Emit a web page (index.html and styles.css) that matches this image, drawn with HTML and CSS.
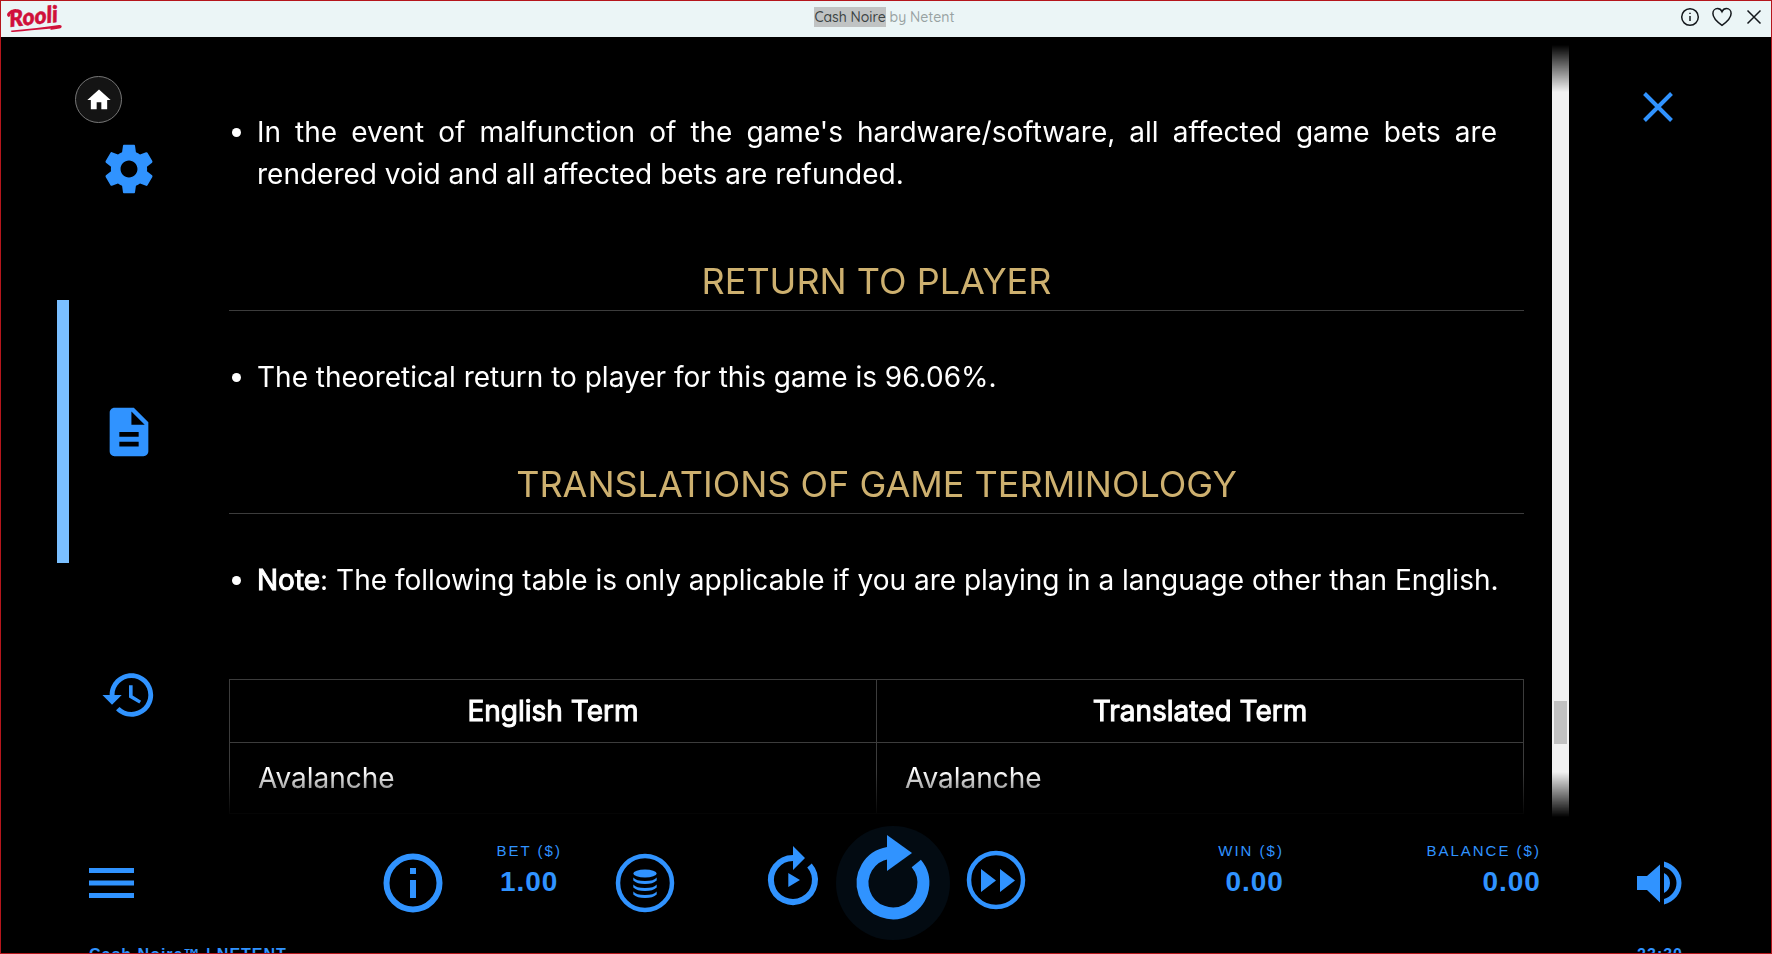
FILE: index.html
```html
<!DOCTYPE html>
<html lang="en">
<head>
    <meta charset="UTF-8">
    <meta name="viewport" content="width=device-width, initial-scale=1.0">
    <title>Cash Noire by Netent</title>
    <link rel="stylesheet" href="styles.css">
</head>
<body>
    <header class="topbar">
        <a class="logo" href="#" aria-label="Rooli">
            <svg width="58" height="28" viewBox="0 0 58 28">
                <text class="logo-text" x="5" y="22" transform="rotate(-6 5 22)">Rooli</text>
                <path d="M3.500 12C0 9.500 3 5.500 11 4L11 6.500C7 7.500 4.500 9 5.500 11Z"/>
                <path d="M7 25.500C24 24 40 22.300 54 20C57.500 19.500 57.500 23 54.500 23.500L45 25C46 24 47 23.500 44 23.700C33 24.500 20 26 8 27C5.500 27.200 5 25.700 7 25.500Z"/>
            </svg>
        </a>
        <p class="title"><mark>Cash Noire</mark> by Netent</p>
        <div class="topbar-actions">
            <button type="button" aria-label="Info">
                <svg width="20" height="20" viewBox="0 0 20 20">
                    <circle cx="10" cy="10" r="8.300"/>
                    <path d="M10 9v5M10 5.700v1.300"/>
                </svg>
            </button>
            <button type="button" aria-label="Favourite">
                <svg width="20" height="20" viewBox="0 0 20 20">
                    <path d="M10 18.300C6 15.500 .9 11.500 .9 6.500C.9 3.500 3 1.600 5.400 1.600C7.500 1.600 9.200 2.800 10 4.600C10.800 2.800 12.500 1.600 14.600 1.600C17 1.600 19.100 3.500 19.100 6.500C19.100 11.500 14 15.500 10 18.300Z"/>
                </svg>
            </button>
            <button type="button" aria-label="Close game">
                <svg width="20" height="20" viewBox="0 0 20 20">
                    <path d="M3.500 3.500l13 13M16.500 3.500l-13 13"/>
                </svg>
            </button>
        </div>
    </header>

    <main class="game">
        <button type="button" class="home" aria-label="Home">
            <svg width="28" height="28" viewBox="0 0 24 24"><path d="M10 20v-6h4v6h5v-8h3L12 3 2 12h3v8z"/></svg>
        </button>

        <nav class="tabs">
            <button type="button" class="tab" aria-label="Settings">
                <svg width="58" height="58" viewBox="0 0 24 24"><path d="M19.430 12.980c.04-.32.07-.64.07-.98s-.03-.66-.07-.98l2.110-1.650c.19-.15.24-.42.12-.64l-2-3.460c-.12-.22-.39-.3-.61-.22l-2.490 1c-.52-.4-1.080-.73-1.690-.98l-.38-2.650C14.460 2.180 14.250 2 14 2h-4c-.25 0-.46.18-.49.42l-.38 2.650c-.61.25-1.170.59-1.690.98l-2.490-1c-.23-.09-.49 0-.61.22l-2 3.460c-.13.22-.07.49.12.64l2.110 1.650c-.04.32-.07.65-.07.98s.03.66.07.98l-2.110 1.650c-.19.15-.24.42-.12.64l2 3.460c.12.22.39.3.61.22l2.490-1c.52.4 1.080.73 1.690.98l.38 2.650c.03.24.24.42.49.42h4c.25 0 .46-.18.49-.42l.38-2.650c.61-.25 1.170-.59 1.690-.98l2.490 1c.23.09.49 0 .61-.22l2-3.460c.12-.22.07-.49-.12-.64l-2.110-1.650zM12 15.500c-1.930 0-3.500-1.570-3.500-3.500s1.570-3.500 3.500-3.500 3.500 1.570 3.500 3.500-1.570 3.500-3.500 3.500z"/></svg>
            </button>
            <button type="button" class="tab active" aria-label="Game rules">
                <svg width="58" height="58" viewBox="0 0 24 24"><path d="M14 2H6c-1.100 0-1.990.9-1.990 2L4 20c0 1.100.89 2 1.990 2H18c1.100 0 2-.9 2-2V8l-6-6zm2 16H8v-2h8v2zm0-4H8v-2h8v2zm-3-5V3.500L18.500 9H13z"/></svg>
            </button>
            <button type="button" class="tab" aria-label="Game history">
                <svg width="58" height="58" viewBox="0 0 24 24"><path d="M13 3c-4.970 0-9 4.030-9 9H1l3.890 3.890.07.14L9 12H6c0-3.870 3.130-7 7-7s7 3.130 7 7-3.130 7-7 7c-1.930 0-3.680-.79-4.940-2.060l-1.420 1.420C8.270 19.990 10.510 21 13 21c4.970 0 9-4.030 9-9s-4.030-9-9-9zm-1 5v5l4.280 2.540.72-1.210-3.500-2.080V8H12z"/></svg>
            </button>
        </nav>

        <div class="rules">
            <div class="rules-content">
                <ul>
                    <li>In the event of malfunction of the game's hardware/software, all affected game bets are rendered void and all affected bets are refunded.</li>
                </ul>
                <h2>RETURN TO PLAYER</h2>
                <ul>
                    <li>The theoretical return to player for this game is 96.06%.</li>
                </ul>
                <h2>TRANSLATIONS OF GAME TERMINOLOGY</h2>
                <ul class="note">
                    <li><b>Note</b>: The following table is only applicable if you are playing in a language other than English.</li>
                </ul>
                <table>
                    <thead>
                        <tr><th>English Term</th><th>Translated Term</th></tr>
                    </thead>
                    <tbody>
                        <tr><td>Avalanche</td><td>Avalanche</td></tr>
                    </tbody>
                </table>
            </div>
            <div class="scrollbar"><div class="thumb"></div></div>
        </div>

        <div class="side">
            <button type="button" class="close" aria-label="Close rules">
                <svg width="30" height="30" viewBox="0 0 30 30"><path d="M1.500 1.500l27 27M28.500 1.500l-27 27"/></svg>
            </button>
        </div>
    </main>

    <footer>
        <div class="controls">
            <button type="button" class="menu" aria-label="Menu">
                <svg width="45" height="30" viewBox="0 0 45 30"><path d="M0 0h45v5H0zM0 12.500h45v5H0zM0 25h45v5H0z"/></svg>
            </button>

            <div class="bets">
                <button type="button" aria-label="Paytable">
                    <svg width="58" height="58" viewBox="-29 -29 58 58">
                        <circle class="ring" r="26.500" stroke-width="6"/>
                        <path d="M-3-15h6v6h-6zM-3-3h6v18h-6z"/>
                    </svg>
                </button>
                <dl class="amount bet">
                    <dt>BET ($)</dt>
                    <dd>1.00</dd>
                </dl>
                <button type="button" aria-label="Bet settings">
                    <svg width="58" height="58" viewBox="-29 -29 58 58">
                        <circle class="ring" r="27" stroke-width="4.500"/>
                        <ellipse cy="-9.500" rx="11.700" ry="4"/>
                        <path d="M-11.700-5.500Q-9-2 0-2Q9-2 11.700-5.500V-2.500Q8 1 0 1Q-8 1-11.700-2.500Z"/>
                        <path d="M-11.700 1.500Q-9 5 0 5Q9 5 11.700 1.500V4.500Q8 8 0 8Q-8 8-11.700 4.500Z"/>
                        <path d="M-11.700 8.500Q-9 12 0 12Q9 12 11.700 8.500V11.500Q8 15 0 15Q-8 15-11.700 11.500Z"/>
                    </svg>
                </button>
            </div>

            <div class="spins">
                <button type="button" class="raised" aria-label="Autoplay">
                    <svg width="50" height="70" viewBox="-25 -35 50 70">
                        <path class="ring" stroke-width="6" d="M0-22A22 22 0 1 0 16.500-14.500"/>
                        <path d="M0-34L12-22L0-10ZM-4.700-7L7 0L-4.700 7Z"/>
                    </svg>
                </button>
                <button type="button" class="spin" aria-label="Spin">
                    <svg width="114" height="114" viewBox="-57 -57 114 114">
                        <path class="ring" stroke-width="12" d="M-5-30A30.400 30.400 0 1 0 23.300-19.500"/>
                        <path d="M-6-48L19-30L-6-12Z"/>
                    </svg>
                </button>
                <button type="button" class="raised" aria-label="Fast play">
                    <svg width="58" height="58" viewBox="-29 -29 58 58">
                        <circle class="ring" r="27" stroke-width="4.500"/>
                        <path d="M-15-11L0 .5L-15 12ZM4-11L19 .5L4 12Z"/>
                    </svg>
                </button>
            </div>

            <div class="totals">
                <dl class="amount">
                    <dt>WIN ($)</dt>
                    <dd>0.00</dd>
                </dl>
                <dl class="amount balance">
                    <dt>BALANCE ($)</dt>
                    <dd>0.00</dd>
                </dl>
            </div>

            <button type="button" class="volume" aria-label="Sound">
                <svg width="46" height="46" viewBox="0 0 46 46">
                    <path d="M0 16H10L23 4.500V42.500L10 30H0ZM27 13c4 2 6 5.500 6 10s-2 8-6 10zM27 1.500v5.500c7 2 12.500 8.500 12.500 16s-5.500 14-12.500 16v5.500c10-2.500 17.500-11 17.500-21.500S37 4 27 1.500z"/>
                </svg>
            </button>
        </div>

        <div class="status">
            <span>Cash Noire™ | NETENT</span>
            <span>23:30</span>
        </div>
    </footer>
</body>
</html>
```

FILE: styles.css
```css
:root {
    --blue: #3093ff;
    --light-blue: #7abfff;
    --gold: #cdb06f;
    --line: #3c3c3c;
}

* {
    box-sizing: border-box;
    margin: 0;
    padding: 0;
}

body {
    display: flex;
    flex-direction: column;
    height: 100vh;
    overflow: hidden;
    border: 1px solid #b5161c;
    background-color: #000000;
    color: #ffffff;
    font-family: Inter, sans-serif;
}

button {
    display: block;
    background: none;
    border: none;
    cursor: pointer;
}

svg {
    display: block;
    fill: var(--blue);
    overflow: visible;
}

/* Top bar */
.topbar {
    display: grid;
    grid-template-columns: 1fr auto 1fr;
    align-items: center;
    flex: none;
    height: 36px;
    padding: 0 7px 0 4px;
    background-color: #ebf5f6;
}

.logo svg {
    fill: #d0103a;
}

.logo-text {
    font: italic 900 23px Lato, sans-serif;
    stroke: #d0103a;
    stroke-width: 0.5;
}

.title {
    padding-bottom: 4px;
    color: #98a2a2;
    font-family: Quicksand, Lato, sans-serif;
    font-size: 14px;
    font-weight: 500;
    line-height: 20px;
}

mark {
    display: inline-block;
    background-color: #c0c3c3;
    color: #3c4444;
}

.topbar-actions {
    display: flex;
    justify-content: flex-end;
    gap: 12px;
    padding-bottom: 4px;
}

.topbar-actions svg {
    fill: none;
    stroke: #14181c;
    stroke-width: 1.5;
}

/* Rules screen */
.game {
    display: flex;
    flex: 1;
    min-height: 0;
    position: relative;
}

.home {
    position: absolute;
    top: 39px;
    left: 74px;
    display: flex;
    align-items: center;
    justify-content: center;
    width: 47px;
    height: 47px;
    border: 1px solid #777777;
    border-radius: 50%;
    background-color: #141414;
}

.home svg {
    fill: #ffffff;
}

.tabs {
    display: flex;
    flex-direction: column;
    flex: none;
    width: 144px;
    margin-left: 56px;
}

.tab {
    display: flex;
    align-items: center;
    justify-content: center;
    flex: 1;
    border: solid transparent;
    border-width: 0 12px;
}

.tab.active {
    border-left-color: var(--light-blue);
}

.rules {
    display: flex;
    flex: 1;
    min-width: 0;
    overflow: hidden;
    -webkit-mask-image: linear-gradient(transparent 8px, #000 55px, #000 calc(100% - 54px), transparent calc(100% - 9px));
    mask-image: linear-gradient(transparent 8px, #000 55px, #000 calc(100% - 54px), transparent calc(100% - 9px));
}

.rules-content {
    flex: 1;
    padding: 74px 28px 0;
    font-size: 28px;
    line-height: 42px;
}

.rules-content ul {
    padding: 0 27px 0 28px;
    text-align: justify;
}

.rules-content .note {
    padding-right: 0;
}

h2 {
    margin: 59px 0 45px;
    padding-bottom: 2px;
    border-bottom: 1px solid var(--line);
    color: var(--gold);
    font-size: 36px;
    font-weight: 400;
    line-height: 54px;
    text-align: center;
}

table {
    width: 100%;
    margin-top: 78px;
    border-collapse: collapse;
    table-layout: fixed;
}

th,
td {
    border: 1px solid var(--line);
    padding: 14px 28px;
    text-align: left;
}

th {
    padding: 10px 28px;
    text-align: center;
}

b,
th {
    font-weight: 400;
    -webkit-text-stroke: 1px currentColor;
}

.scrollbar {
    flex: none;
    width: 17px;
    padding: 664px 2px 0;
    background-color: #f1f1f1;
}

.thumb {
    height: 43px;
    background-color: #c1c1c1;
}

.side {
    flex: none;
    width: 202px;
    padding: 55px 24px 0 0;
}

.close {
    margin: 0 auto;
}

.close svg {
    stroke: var(--blue);
    stroke-width: 4;
}

/* Bottom controls */
footer {
    flex: none;
    color: var(--blue);
    font-family: "Liberation Sans", Arial, sans-serif;
    letter-spacing: 1px;
}

.controls {
    display: grid;
    grid-template-columns: 295fr 384fr 256fr 516fr 142fr;
    align-items: center;
    height: 114px;
    padding: 0 88px;
}

.ring {
    fill: none;
    stroke: var(--blue);
}

.menu {
    justify-self: start;
}

.bets,
.spins,
.totals {
    display: flex;
    align-items: center;
}

.amount {
    padding-bottom: 26px;
    text-align: right;
}

.amount dt {
    font-size: 15px;
    letter-spacing: 2px;
    line-height: 20px;
}

.amount dd {
    margin-top: 4px;
    font-size: 28px;
    font-weight: 700;
    line-height: 34px;
}

.bet {
    width: 174px;
    text-align: center;
}

.spins {
    justify-content: space-between;
}

.raised {
    margin-bottom: 6px;
}

.spin {
    border-radius: 50%;
    background-color: #030b12;
}

.totals {
    justify-content: flex-end;
}

.balance {
    width: 257px;
}

.volume {
    justify-self: end;
}

.status {
    display: flex;
    justify-content: space-between;
    height: 13px;
    padding: 0 88px;
    overflow: hidden;
    font-size: 16px;
    font-weight: 700;
    line-height: 30px;
}
```
